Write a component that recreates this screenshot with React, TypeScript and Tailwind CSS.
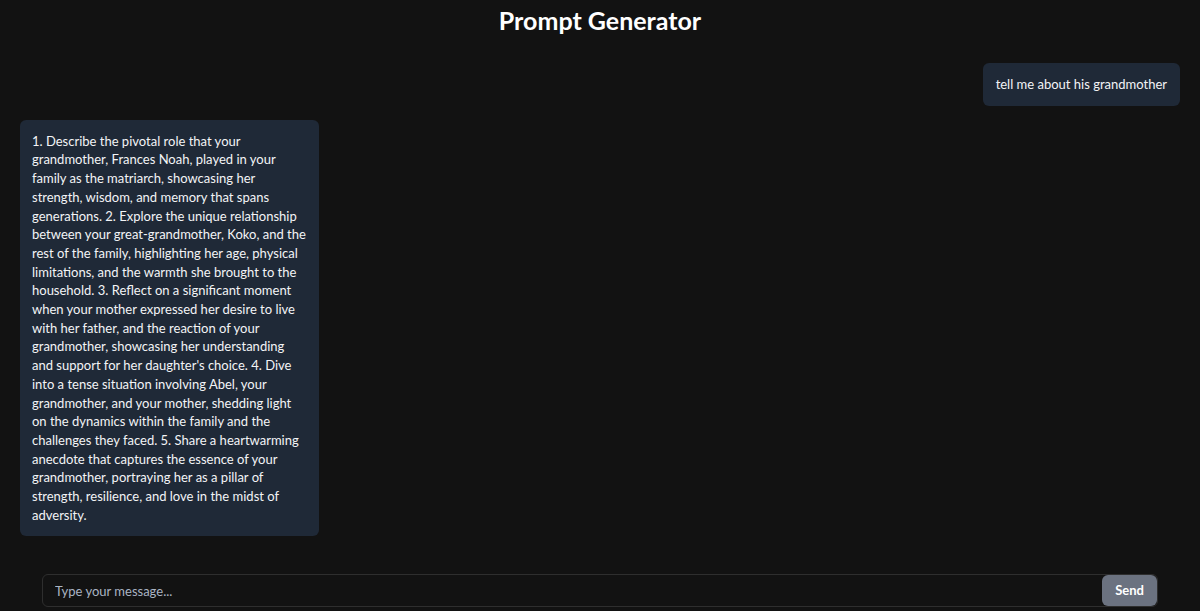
import { useState } from "react";

type Message = { id: number; role: "user" | "assistant"; text: string };

const messages: Message[] = [
  { id: 1, role: "user", text: "tell me about his grandmother" },
  {
    id: 2,
    role: "assistant",
    text:
      "1. Describe the pivotal role that your grandmother, Frances Noah, played in your family as the matriarch, showcasing her strength, wisdom, and memory that spans generations. 2. Explore the unique relationship between your great-grandmother, Koko, and the rest of the family, highlighting her age, physical limitations, and the warmth she brought to the household. 3. Reflect on a significant moment when your mother expressed her desire to live with her father, and the reaction of your grandmother, showcasing her understanding and support for her daughter's choice. 4. Dive into a tense situation involving Abel, your grandmother, and your mother, shedding light on the dynamics within the family and the challenges they faced. 5. Share a heartwarming anecdote that captures the essence of your grandmother, portraying her as a pillar of strength, resilience, and love in the midst of adversity.",
  },
];

export default function App() {
  const [input, setInput] = useState("");

  return (
    <div className="flex h-[611px] flex-col bg-[#121212] font-['Lato',sans-serif] text-white">
      <h1 className="flex h-[42px] items-center justify-center text-[25px] font-bold">Prompt Generator</h1>

      <div className="flex flex-1 flex-col gap-[14px] px-5 pt-[21px]">
        {messages.map((msg) => (
          <div key={msg.id} className={msg.role === "user" ? "flex justify-end" : "flex justify-start"}>
            <div
              className={
                msg.role === "user"
                  ? "rounded-md bg-[#1f2937] px-[13px] py-3 text-[13px] leading-[18.7px] text-gray-100"
                  : "w-[299px] rounded-md bg-[#1f2937] px-3 py-3 text-[13px] leading-[18.7px] text-gray-100"
              }
            >
              {msg.text}
            </div>
          </div>
        ))}
      </div>

      <form className="mx-[42px] mb-1 flex rounded-md border border-[#2e2e2e]" onSubmit={(e) => e.preventDefault()}>
        <input
          value={input}
          onChange={(e) => setInput(e.target.value)}
          placeholder="Type your message..."
          className="h-[31px] flex-1 bg-transparent px-3 text-[13px] text-gray-100 outline-none placeholder:text-[#aab4c3]"
        />
        <button type="submit" className="h-[31px] rounded-md bg-[#6b7280] px-[13px] text-[13px] font-bold text-white">
          Send
        </button>
      </form>
    </div>
  );
}
